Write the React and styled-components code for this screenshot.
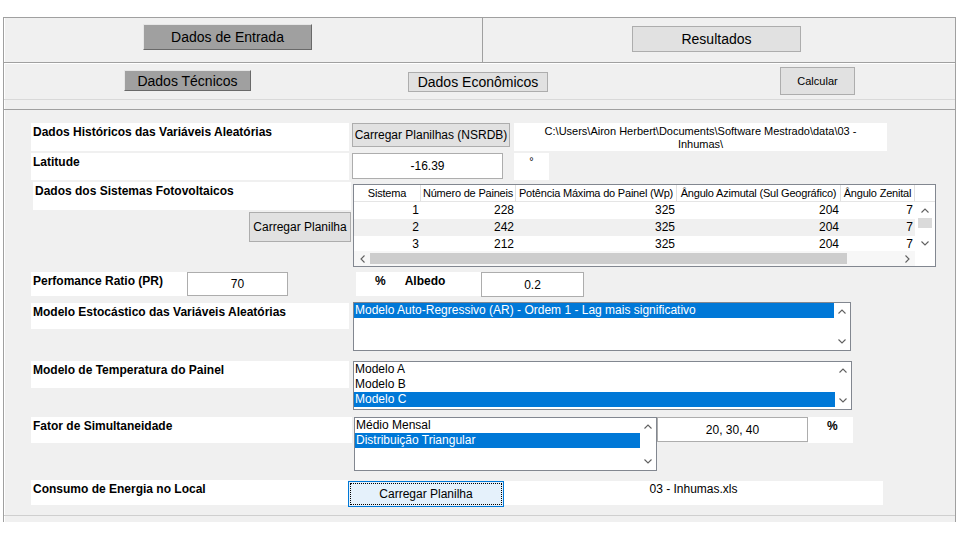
import styled, { createGlobalStyle } from "styled-components";

const GlobalStyle = createGlobalStyle`
  body {
    margin: 0;
    background: #fff;
    font-family: "Liberation Sans", Arial, sans-serif;
    color: #000;
  }
`;

const Window = styled.div`
  margin: 17px 0 0 3px;
  width: 953px;
  height: 505px;
  box-sizing: border-box;
  border: 1px solid #a0a0a0;
  border-bottom: none;
  background: #f0f0f0;
  box-shadow: inset 1px 0 0 #fff;
  display: flex;
  flex-direction: column;
`;

const TabBar = styled.div`
  display: grid;
  grid-template-columns: 479px 1fr;
  height: 44px;
  border-bottom: 1px solid #a0a0a0;
`;

const TabCell = styled.div`
  padding: ${(p) => p.$top}px 0 0 ${(p) => p.$left}px;
  border-right: ${(p) => (p.$divider ? "1px solid #a0a0a0" : "none")};
`;

const SubBar = styled.div`
  display: flex;
  align-items: flex-start;
  height: 35px;
  border-top: 1px solid #fff;
  border-bottom: 1px solid #d9d9d9;
`;

const Band = styled.div`
  height: 9px;
  border-bottom: 1px solid #a0a0a0;
`;

const Content = styled.div`
  height: 405px;
  padding-left: 27px;
  border-bottom: 1px solid #cfcfcf;
`;

const Button = styled.button`
  flex: none;
  width: ${(p) => p.$w}px;
  height: ${(p) => p.$h}px;
  margin: ${(p) => p.$mt || 0}px 0 0 ${(p) => p.$ml || 0}px;
  padding: 0;
  box-sizing: border-box;
  font-family: "Liberation Sans", Arial, sans-serif;
  font-size: ${(p) => p.$size || 12}px;
  color: #000;
  background: ${(p) => (p.$active ? "#a0a0a0" : "#e1e1e1")};
  border: 1px solid;
  border-color: ${(p) =>
    p.$active ? "#e6e6e6 #696969 #696969 #e6e6e6" : "#adadad"};
  white-space: nowrap;
`;

const FocusButton = styled(Button)`
  background: #e5f1fb;
  border-color: #0078d7;
  outline: 1px dotted #000;
  outline-offset: -3px;
`;

const Row = styled.div`
  display: flex;
  align-items: flex-start;
  margin-top: ${(p) => p.$mt}px;
`;

const Label = styled.div`
  flex: none;
  width: ${(p) => p.$w}px;
  height: ${(p) => p.$h}px;
  margin-top: ${(p) => p.$mt || 0}px;
  padding: 2px 0 0 2px;
  box-sizing: border-box;
  background: #fff;
  font-weight: bold;
  font-size: 12px;
  line-height: 14px;
  white-space: nowrap;
`;

const TextBox = styled.div`
  flex: none;
  width: ${(p) => p.$w}px;
  height: ${(p) => p.$h}px;
  margin: ${(p) => p.$mt || 0}px 0 0 ${(p) => p.$ml || 0}px;
  padding-top: 2px;
  box-sizing: border-box;
  background: #fff;
  font-size: ${(p) => p.$size || 12}px;
  line-height: 13px;
  text-align: center;
`;

const Field = styled.div`
  flex: none;
  width: ${(p) => p.$w}px;
  height: ${(p) => p.$h}px;
  margin-left: ${(p) => p.$ml || 0}px;
  box-sizing: border-box;
  background: #fff;
  border: 1px solid #adadad;
  font-size: 12px;
  line-height: ${(p) => p.$h - 1}px;
  text-align: center;
`;

const PctBox = styled.div`
  flex: none;
  display: flex;
  gap: ${(p) => p.$gap || 0}px;
  width: ${(p) => p.$w}px;
  height: ${(p) => p.$h}px;
  padding: 2px 0 0 ${(p) => p.$pl}px;
  box-sizing: border-box;
  background: #fff;
  font-weight: bold;
  font-size: 12px;
  line-height: 14px;
`;

const LeftCol = styled.div`
  flex: none;
  width: 320px;
  display: flex;
  flex-direction: column;
  align-items: flex-end;
`;

/* table */

const Table = styled.div`
  flex: none;
  width: 583px;
  height: 83px;
  margin: 2px 0 0 2px;
  box-sizing: border-box;
  border: 1px solid #828790;
  background: #fff;
  display: flex;
  flex-direction: column;
`;

const TableTop = styled.div`
  display: flex;
  height: 66px;
`;

const Grid = styled.div`
  width: 561px;
  display: grid;
  grid-template-columns: 67px 95px 161px 164px 74px;
  grid-template-rows: 17px 17px 17px 15px;
  overflow: hidden;
`;

const HeadCell = styled.div`
  border-right: 1px solid #e1e1e1;
  border-bottom: 1px solid #e5e5e5;
  font-size: 11px;
  letter-spacing: -0.2px;
  line-height: 16px;
  text-align: center;
  white-space: nowrap;
  overflow: hidden;
`;

const Cell = styled.div`
  background: ${(p) => (p.$alt ? "#f0f0f0" : "#fff")};
  font-size: 12px;
  line-height: 17px;
  text-align: right;
  padding-right: 2px;
  overflow: hidden;
`;

const VScroll = styled.div`
  width: 20px;
  display: flex;
  flex-direction: column;
  align-items: center;
`;

const HeadSpacer = styled.div`
  align-self: stretch;
  height: 16px;
  border-bottom: 1px solid #e5e5e5;
`;

const ArrowBox = styled.div`
  flex: none;
  width: ${(p) => p.$w || 16}px;
  height: ${(p) => p.$h || 16}px;
  display: flex;
  align-items: center;
  justify-content: center;
`;

const VThumb = styled.div`
  width: 14px;
  height: 10px;
  background: #dadada;
`;

const Spring = styled.div`
  flex: 1;
`;

const HScroll = styled.div`
  display: flex;
  align-items: center;
  height: 15px;
`;

const HTrack = styled.div`
  width: 561px;
  height: 15px;
  display: flex;
  align-items: center;
  background: #f7f7f7;
`;

const HThumb = styled.div`
  width: 477px;
  height: 11px;
  background: #cdcdcd;
`;

/* listbox */

const ListBox = styled.div`
  flex: none;
  display: flex;
  width: ${(p) => p.$w}px;
  height: ${(p) => p.$h}px;
  margin-left: ${(p) => p.$ml || 0}px;
  box-sizing: border-box;
  border: 1px solid #828790;
  background: #fff;
`;

const ListItems = styled.div`
  flex: 1;
  display: flex;
  flex-direction: column;
`;

const ListItem = styled.div`
  height: 15px;
  line-height: 15px;
  padding-left: 1px;
  font-size: 12px;
  white-space: nowrap;
  background: ${(p) => (p.$selected ? "#0078d7" : "transparent")};
  color: ${(p) => (p.$selected ? "#fff" : "#000")};
`;

const ListScroll = styled.div`
  width: 16px;
  display: flex;
  flex-direction: column;
  justify-content: space-between;
`;

const Chevron = ({ dir }) => {
  const d = {
    up: "M0.5 4.5 L4 1 L7.5 4.5",
    down: "M0.5 0.5 L4 4 L7.5 0.5",
    left: "M4.5 0.5 L1 4 L4.5 7.5",
    right: "M0.5 0.5 L4 4 L0.5 7.5",
  }[dir];
  const vertical = dir === "up" || dir === "down";
  return (
    <svg
      width={vertical ? 8 : 5}
      height={vertical ? 5 : 8}
      viewBox={vertical ? "0 0 8 5" : "0 0 5 8"}
    >
      <path d={d} fill="none" stroke="#606060" strokeWidth="1.1" />
    </svg>
  );
};

const List = ({ w, h, ml, items, selected }) => (
  <ListBox $w={w} $h={h} $ml={ml}>
    <ListItems>
      {items.map((item, i) => (
        <ListItem key={item} $selected={i === selected}>
          {item}
        </ListItem>
      ))}
    </ListItems>
    <ListScroll>
      <ArrowBox $h={17}>
        <Chevron dir="up" />
      </ArrowBox>
      <ArrowBox $h={17}>
        <Chevron dir="down" />
      </ArrowBox>
    </ListScroll>
  </ListBox>
);

const headers = [
  "Sistema",
  "Número de Paineis",
  "Potência Máxima do Painel (Wp)",
  "Ângulo Azimutal (Sul Geográfico)",
  "Ângulo Zenital",
];

const systems = [
  [1, 228, 325, 204, 7],
  [2, 242, 325, 204, 7],
  [3, 212, 325, 204, 7],
];

const SystemsTable = () => (
  <Table>
    <TableTop>
      <Grid>
        {headers.map((h) => (
          <HeadCell key={h}>{h}</HeadCell>
        ))}
        {systems.map((row, r) =>
          row.map((v, c) => (
            <Cell key={`${r}-${c}`} $alt={r === 1}>
              {v}
            </Cell>
          ))
        )}
      </Grid>
      <VScroll>
        <HeadSpacer />
        <ArrowBox>
          <Chevron dir="up" />
        </ArrowBox>
        <VThumb />
        <Spring />
        <ArrowBox>
          <Chevron dir="down" />
        </ArrowBox>
      </VScroll>
    </TableTop>
    <HScroll>
      <HTrack>
        <ArrowBox $h={15}>
          <Chevron dir="left" />
        </ArrowBox>
        <HThumb />
        <Spring />
        <ArrowBox $h={15}>
          <Chevron dir="right" />
        </ArrowBox>
      </HTrack>
    </HScroll>
  </Table>
);

const App = () => (
  <>
    <GlobalStyle />
    <Window>
      <TabBar>
        <TabCell $left={139} $top={6} $divider>
          <Button $active $w={169} $h={26} $size={14}>
            Dados de Entrada
          </Button>
        </TabCell>
        <TabCell $left={149} $top={8}>
          <Button $w={169} $h={26} $size={14}>
            Resultados
          </Button>
        </TabCell>
      </TabBar>

      <SubBar>
        <Button $active $w={127} $h={21} $size={14} $ml={120} $mt={6}>
          Dados Técnicos
        </Button>
        <Button $w={140} $h={20} $size={14} $ml={157} $mt={8}>
          Dados Econômicos
        </Button>
        <Button $w={75} $h={28} $size={11} $ml={232} $mt={3}>
          Calcular
        </Button>
      </SubBar>
      <Band />

      <Content>
        <Row $mt={13}>
          <Label $w={318} $h={28}>
            Dados Históricos das Variáveis Aleatórias
          </Label>
          <Button $w={158} $h={24} $ml={3}>
            Carregar Planilhas (NSRDB)
          </Button>
          <TextBox $w={373} $h={28} $ml={4} $size={11}>
            C:\Users\Airon Herbert\Documents\Software Mestrado\data\03 -
            <br />
            Inhumas\
          </TextBox>
        </Row>

        <Row $mt={2}>
          <Label $w={318} $h={27}>
            Latitude
          </Label>
          <Field $w={151} $h={26} $ml={3}>
            -16.39
          </Field>
          <TextBox $w={35} $h={27} $ml={11} $size={11}>
            °
          </TextBox>
        </Row>

        <Row $mt={2}>
          <LeftCol>
            <Label $w={318} $h={28}>
              Dados dos Sistemas Fotovoltaicos
            </Label>
            <Button $w={102} $h={30} $mt={2}>
              Carregar Planilha
            </Button>
          </LeftCol>
          <SystemsTable />
        </Row>

        <Row $mt={5}>
          <Label $w={156} $h={24}>
            Perfomance Ratio (PR)
          </Label>
          <Field $w={101} $h={24}>
            70
          </Field>
          <Spring as="span" style={{ flex: "none", width: 68 }} />
          <PctBox $w={125} $h={24} $pl={19} $gap={19}>
            <span>%</span>
            <span>Albedo</span>
          </PctBox>
          <Field $w={103} $h={25}>
            0.2
          </Field>
        </Row>

        <Row $mt={5}>
          <Label $w={318} $h={26} $mt={1}>
            Modelo Estocástico das Variáveis Aleatórias
          </Label>
          <List
            w={498}
            h={49}
            ml={4}
            items={["Modelo Auto-Regressivo (AR) - Ordem 1 - Lag mais significativo"]}
            selected={0}
          />
        </Row>

        <Row $mt={10}>
          <Label $w={318} $h={27}>
            Modelo de Temperatura do Painel
          </Label>
          <List
            w={499}
            h={49}
            ml={4}
            items={["Modelo A", "Modelo B", "Modelo C"]}
            selected={2}
          />
        </Row>

        <Row $mt={7}>
          <Label $w={321} $h={26}>
            Fator de Simultaneidade
          </Label>
          <List
            w={303}
            h={54}
            ml={2}
            items={["Médio Mensal", "Distribuição Triangular"]}
            selected={1}
          />
          <Field $w={151} $h={25}>
            20, 30, 40
          </Field>
          <PctBox $w={45} $h={26} $pl={19}>
            %
          </PctBox>
        </Row>

        <Row $mt={9}>
          <Label $w={317} $h={25}>
            Consumo de Energia no Local
          </Label>
          <FocusButton $w={156} $h={26} $mt={1}>
            Carregar Planilha
          </FocusButton>
          <TextBox $w={379} $h={24} $mt={1}>
            03 - Inhumas.xls
          </TextBox>
        </Row>
      </Content>
    </Window>
  </>
);

export default App;
